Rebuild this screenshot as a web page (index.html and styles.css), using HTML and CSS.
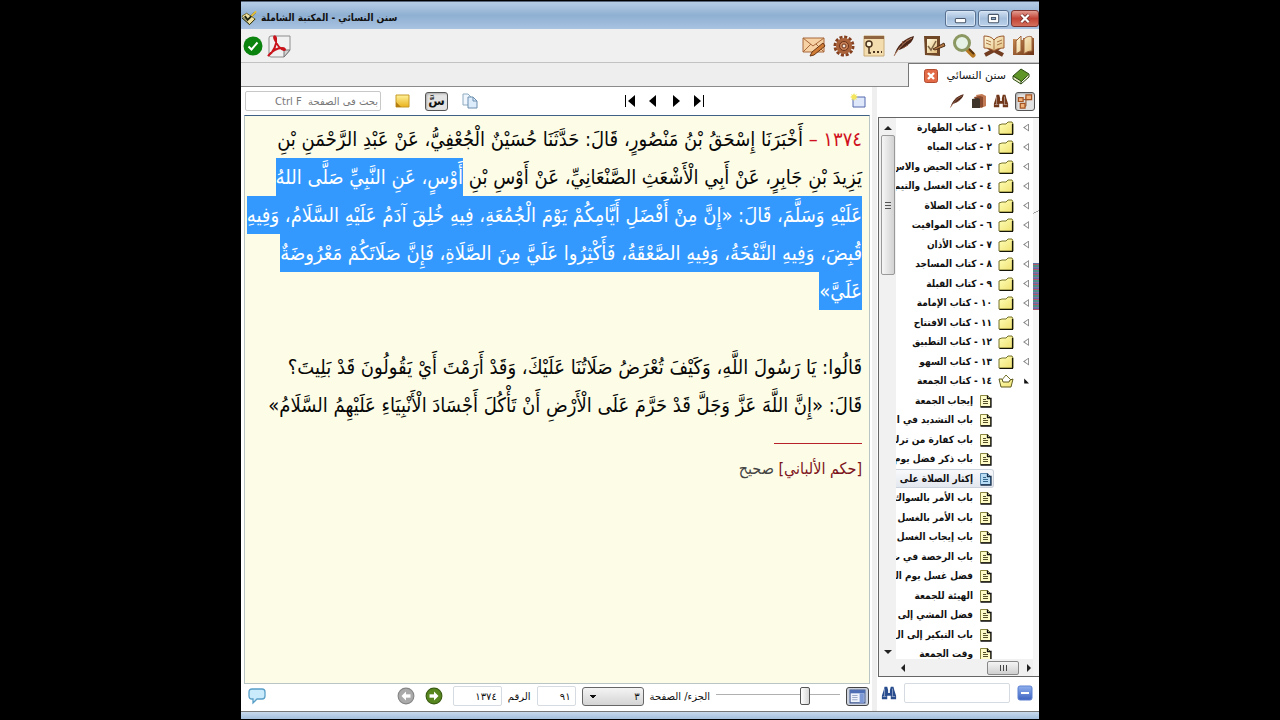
FILE: index.html
```html
<!DOCTYPE html>
<html lang="ar">
<head>
<meta charset="utf-8">
<title>سنن النسائي - المكتبة الشاملة</title>
<link rel="stylesheet" href="styles.css">
</head>
<body>
<svg class="defs" aria-hidden="true">
  <defs>
    <linearGradient id="paper" x1="0" y1="0" x2="1" y2="1"><stop offset="0" stop-color="#fffbe0"/><stop offset="1" stop-color="#e3bd7c"/></linearGradient>
    <linearGradient id="brown" x1="0" y1="0" x2="1" y2="1"><stop offset="0" stop-color="#c88a50"/><stop offset="1" stop-color="#6b3316"/></linearGradient>
    <linearGradient id="yel" x1="0" y1="0" x2="1" y2="1"><stop offset="0" stop-color="#ffffb8"/><stop offset="1" stop-color="#efe070"/></linearGradient>
    <linearGradient id="note" x1="0" y1="0" x2="0" y2="1"><stop offset="0" stop-color="#fff29a"/><stop offset="1" stop-color="#e9b21c"/></linearGradient>
    <linearGradient id="blue" x1="0" y1="0" x2="0" y2="1"><stop offset="0" stop-color="#8fb0ee"/><stop offset="1" stop-color="#3d62c0"/></linearGradient>
    <symbol id="folder" viewBox="0 0 16 14"><path d="M1 13V4l3-1h4l2-2h4l1 2v10z" fill="url(#yel)" stroke="#77722a"/><path d="M1.500 13.500H14.500V3" fill="none" stroke="#15150a" stroke-width="1.200"/></symbol>
    <symbol id="folder-open" viewBox="0 0 16 14"><path d="M3 7l5-6 5 5v3H3z" fill="#fff" stroke="#77722a"/><path d="M1 5l2 8h10l2-8-3 1-1 2H5L4 5z" fill="url(#yel)" stroke="#5f5b1e"/></symbol>
    <symbol id="doc" viewBox="0 0 12 14"><path d="M.5 1.500h7l3 3v8H.5z" fill="#fffcc8" stroke="#8a8640"/><path d="M7.500 1.500v3h3.500v8.500H.5" fill="none" stroke="#111" stroke-width="1.300"/><path d="M3 5.500h3M3 7.500h5M3 9.500h5" stroke="#55502a"/></symbol>
    <symbol id="doc-blue" viewBox="0 0 12 14"><path d="M.5 1.500h7l3 3v8H.5z" fill="#b9dcf5" stroke="#5b8ab0"/><path d="M7.500 1.500v3h3.500v8.500H.5" fill="none" stroke="#17304d" stroke-width="1.300"/><path d="M3 5.500h3M3 7.500h5M3 9.500h5" stroke="#35668c"/></symbol>
    <symbol id="quill" viewBox="0 0 24 24"><path d="M2 22C5 12 11 5 22 2c-1 5-4 8-8 10-2 2-6 4-8 4z" fill="#4a2416"/><path d="M2 22C7 14 12 8 20 4" fill="none" stroke="#b98568"/><path d="M10 10l1-3M14 8l1-3M11 14l5-3" stroke="#8d5136"/></symbol>
    <symbol id="binoc" viewBox="0 0 18 18"><path d="M3 6l1-4h3l1 4v3h2V6l1-4h3l1 4 2 6v4h-6v-4H7v4H1v-4z" fill="currentColor"/><path d="M4 4v9M13 4v9M2 13h4M12 13h4" stroke="#fff" opacity=".5"/></symbol>
  </defs>
</svg>
<main class="window">
  <header class="titlebar">
    <svg class="app-icon" viewBox="0 0 18 16"><path d="M1 6l5-3 9 6-6 6z" fill="#efe0a0" stroke="#6b6223"/><path d="M1 8l8 7 6-6" fill="none" stroke="#33350f"/><path d="M4 6l3 4 8-8" fill="none" stroke="#1d2412" stroke-width="2"/><path d="M11 6l5-5" stroke="#e8bf35" stroke-width="2"/></svg>
    <h1 class="title" dir="rtl">سنن النسائي - المكتبة الشاملة</h1>
    <div class="win-buttons">
      <button class="win-btn" aria-label="تصغير"><svg viewBox="0 0 28 14"><rect x="9" y="7" width="10" height="4" rx="1" fill="#fff" stroke="#49576a"/></svg></button>
      <button class="win-btn" aria-label="تكبير"><svg viewBox="0 0 28 14"><rect x="9" y="3" width="10" height="8" rx="1" fill="#fff" stroke="#49576a"/><rect x="12" y="6" width="4" height="2" fill="#8fabc9" stroke="#49576a"/></svg></button>
      <button class="win-btn close" aria-label="إغلاق"><svg viewBox="0 0 28 14"><path d="M10 3l8 8M18 3l-8 8" stroke="#6b2a25" stroke-width="4"/><path d="M10 3l8 8M18 3l-8 8" stroke="#fff" stroke-width="2.400"/></svg></button>
    </div>
  </header>

  <div class="toolbar">
    <button class="tool small" aria-label="موافق"><svg viewBox="0 0 20 20"><circle cx="10" cy="10" r="9.500" fill="#0b830f"/><path d="M5.500 10.500l3 3 6-7" fill="none" stroke="#fff" stroke-width="2"/></svg></button>
    <button class="tool" aria-label="PDF"><svg viewBox="0 0 24 24"><path d="M4 2h19v14l-6 7H4q-2 0-2-2V4q0-2 2-2z" fill="#f1f1f1" stroke="#8d8d8d"/><path d="M23 16h-6v7z" fill="#d3d3d3" stroke="#777"/><path d="M1 22c6-4 9-12 8-18-1-3-3-2-1 2 2 5 5 9 9 10 2 0 1-2-2-2-5 0-10 3-14 8z" fill="none" stroke="#c9141c" stroke-width="2"/></svg></button>
    <div class="tool-group">
      <button class="tool" aria-label="مراسلة"><svg viewBox="0 0 24 24"><path d="M1 4h21v14H1z" fill="#f7d2a5" stroke="#a7693c"/><path d="M1 4l10 8L22 4M1 18l8-8M22 18l-8-8" fill="none" stroke="#a7693c"/><path d="M8 22l2-4 11-9 2 3-11 9z" fill="#cf7d36" stroke="#6d3715"/></svg></button>
      <button class="tool" aria-label="خيارات"><svg viewBox="0 0 24 24"><circle cx="12" cy="12" r="9" fill="none" stroke="#84401f" stroke-width="3" stroke-dasharray="3 1.700"/><circle cx="12" cy="12" r="6" fill="#b66a3f" stroke="#a9623a" stroke-width="4"/><circle cx="12" cy="12" r="4.500" fill="#c98258" stroke="#6b3218"/><circle cx="12" cy="12" r="2" fill="#f5e6dc" stroke="#6b3218"/></svg></button>
      <button class="tool" aria-label="كلمة المرور"><svg viewBox="0 0 24 24"><path d="M2 2h20v20H2z" fill="#f3dcae" stroke="#c9ae78"/><path d="M2 2h20v3H2z" fill="#8e6540"/><circle cx="7" cy="10" r="3" fill="#fff5d8" stroke="#4b321c" stroke-width="1.500"/><path d="M7 13v6h2" fill="none" stroke="#4b321c" stroke-width="1.500"/><path d="M11 18h2M15 18h2M19 18h1" stroke="#4b321c" stroke-width="2"/></svg></button>
      <button class="tool" aria-label="تحرير"><svg viewBox="0 0 24 24"><use href="#quill"/></svg></button>
      <button class="tool" aria-label="اختيار"><svg viewBox="0 0 24 24"><path d="M2 2h16v20l-15-1z" fill="#704727"/><path d="M5 5h10v14H5z" fill="url(#paper)"/><path d="M6 12l3 4 5-9" fill="none" stroke="#7d6544" stroke-width="1.500"/><path d="M11 15l11-6 1 3-10 4z" fill="#b37845" stroke="#513018"/></svg></button>
      <button class="tool" aria-label="بحث"><svg viewBox="0 0 24 24"><path d="M15 15l6 6" stroke="#b67823" stroke-width="5" stroke-linecap="round"/><path d="M17 15l5 5" stroke="#563312" stroke-width="2"/><circle cx="10" cy="9" r="7.500" fill="#e7f2e6" stroke="#8b9861" stroke-width="3"/></svg></button>
      <button class="tool" aria-label="المصحف"><svg viewBox="0 0 24 24"><path d="M3 21L18 13M21 21L6 13" fill="none" stroke="#713c20" stroke-width="4"/><path d="M2 2c4 0 8 1 10 4 2-3 6-4 10-4v12c-4 0-8 1-10 3-2-2-6-3-10-3z" fill="url(#paper)" stroke="#9b592e"/><path d="M12 6v10M4 6l5 2M4 9l5 2M20 6l-5 2M20 9l-5 2" stroke="#a97646"/></svg></button>
      <button class="tool" aria-label="الكتب"><svg viewBox="0 0 24 24"><path d="M1 5l10 1v15H1zM11 4h11v17H11z" fill="url(#brown)"/><path d="M4 7l5-5v15l-5 3zM12 5c3-3 6-3 8-2v14c-3 0-6 1-8 3z" fill="url(#paper)" stroke="#9b6039"/></svg></button>
    </div>
  </div>

  <nav class="tabs" dir="rtl">
    <div class="tab">
      <svg class="book-icon" viewBox="0 0 18 18"><path d="M1 9l8-7 8 5-8 8z" fill="#5f9427" stroke="#2b4a10"/><path d="M1 9v3l8 5v-3zM9 17l8-7V7" fill="#e6e8c4" stroke="#2b4a10"/></svg>
      <a href="#reader">سنن النسائي</a>
      <button class="tab-close" aria-label="إغلاق"><svg viewBox="0 0 14 14"><rect x=".5" y=".5" width="13" height="13" rx="2" fill="#e36a46" stroke="#b04b30"/><path d="M4 4l6 6M10 4l-6 6" stroke="#fff" stroke-width="2.400"/></svg></button>
    </div>
  </nav>

  <div class="panes">
    <section class="reader-pane">
      <div class="pane-bar">
        <input class="find" type="search" dir="rtl" aria-label="بحث في الصفحة" placeholder="بحث في الصفحة  Ctrl F">
        <button class="icon-btn" aria-label="ملاحظة"><svg viewBox="0 0 16 16"><path d="M1 2h13v12H1z" fill="url(#note)" stroke="#c69a28"/><path d="M1 9l5 5H1z" fill="#b47d12"/></svg></button>
        <button class="toggle" aria-label="التشكيل">سَّ</button>
        <button class="icon-btn" aria-label="نسخ"><svg viewBox="0 0 16 16"><path d="M1 1h5l3 3v8H1z" fill="#eff6fd" stroke="#8fabc0"/><path d="M6 4h5l4 4v7H6z" fill="#dcecfa" stroke="#6c8fb0"/><path d="M11 4v4h4" fill="none" stroke="#6c8fb0"/></svg></button>
        <div class="page-nav">
          <button aria-label="الأول"><svg viewBox="0 0 12 12"><path d="M1 0h1v12H1zM11 0v12L4 6z"/></svg></button>
          <button aria-label="السابق"><svg viewBox="0 0 12 12"><path d="M9 0v12L2 6z"/></svg></button>
          <button aria-label="التالي"><svg viewBox="0 0 12 12"><path d="M3 0v12l7-6z"/></svg></button>
          <button aria-label="الأخير"><svg viewBox="0 0 12 12"><path d="M10 0h1v12h-1zM1 0v12l7-6z"/></svg></button>
        </div>
        <button class="icon-btn" aria-label="نافذة جديدة"><svg viewBox="0 0 16 16"><path d="M3 4h12v10H3z" fill="#dfe7fb" stroke="#5268ae"/><path d="M1 1l2 1 1-2 1 2 2-1-1 2 2 1-2 1 1 2-2-1-1 2-1-2-2 1 1-2-2-1 2-1z" fill="#f3e65e"/></svg></button>
      </div>
      <article class="reader" id="reader" dir="rtl">
        <p><span class="num">١٣٧٤ –</span> أَخْبَرَنَا إِسْحَقُ بْنُ مَنْصُورٍ، قَالَ: حَدَّثَنَا حُسَيْنٌ الْجُعْفِيُّ، عَنْ عَبْدِ الرَّحْمَنِ بْنِ</p>
        <p>يَزِيدَ بْنِ جَابِرٍ، عَنْ أَبِي الْأَشْعَثِ الصَّنْعَانِيِّ، عَنْ أَوْسِ بْنِ <mark>أَوْسٍ، عَنِ النَّبِيِّ صَلَّى اللهُ</mark></p>
        <p><mark>عَلَيْهِ وَسَلَّمَ، قَالَ: «إِنَّ مِنْ أَفْضَلِ أَيَّامِكُمْ يَوْمَ الْجُمُعَةِ، فِيهِ خُلِقَ آدَمُ عَلَيْهِ السَّلَامُ، وَفِيهِ</mark></p>
        <p><mark>قُبِضَ، وَفِيهِ النَّفْخَةُ، وَفِيهِ الصَّعْقَةُ، فَأَكْثِرُوا عَلَيَّ مِنَ الصَّلَاةِ، فَإِنَّ صَلَاتَكُمْ مَعْرُوضَةٌ</mark></p>
        <p class="para-end"><mark>عَلَيَّ»</mark></p>
        <p>قَالُوا: يَا رَسُولَ اللَّهِ، وَكَيْفَ تُعْرَضُ صَلَاتُنَا عَلَيْكَ، وَقَدْ أَرَمْتَ أَيْ يَقُولُونَ قَدْ بَلِيتَ؟</p>
        <p>قَالَ: «إِنَّ اللَّهَ عَزَّ وَجَلَّ قَدْ حَرَّمَ عَلَى الْأَرْضِ أَنْ تَأْكُلَ أَجْسَادَ الْأَنْبِيَاءِ عَلَيْهِمُ السَّلَامُ»</p>
        <hr class="note-rule">
        <p class="footnote"><span>[حكم الألباني]</span> صحيح</p>
      </article>
      <div class="status-controls">
        <button class="icon-btn bubble" aria-label="تعليق"><svg viewBox="0 0 18 18"><path d="M4 2h10q3 0 3 3v4q0 3-3 3H9l-4 4v-4H4q-3 0-3-3V5q0-3 3-3z" fill="#c9ebfb" stroke="#5a9fc7" stroke-width="1.300"/></svg></button>
        <button class="round" aria-label="رجوع"><svg viewBox="0 0 16 16"><circle cx="8" cy="8" r="7" fill="#aaa" stroke="#858585"/><path d="M12 8H6" stroke="#fff" stroke-width="3"/><path d="M8 4L4 8l4 4z" fill="#fff"/></svg></button>
        <button class="round" aria-label="تقدم"><svg viewBox="0 0 16 16"><circle cx="8" cy="8" r="7" fill="#57861f" stroke="#385b10"/><path d="M4 8h6" stroke="#fff" stroke-width="3"/><path d="M8 4l4 4-4 4z" fill="#fff"/></svg></button>
        <input class="field number" id="number" dir="rtl" value="١٣٧٤"><label for="number">الرقم</label>
        <input class="field page" dir="rtl" id="page" aria-label="الصفحة" value="٩١">
        <select class="part" id="part" dir="rtl"><option>٣</option></select><label for="part">الجزء/ الصفحة</label>
        <input class="slider" type="range" min="0" max="100" value="74" aria-label="موضع الصفحة">
        <button class="layout-btn" aria-label="القائمة الجانبية"><svg viewBox="0 0 16 14"><path d="M1 1h14v12H1z" fill="#eef3fc" stroke="#3d558d"/><path d="M1 1h14v3H1z" fill="#4e6fb5"/><path d="M10 4h4v9h-4z" fill="#7d9ad6"/><path d="M3 6h5M3 8h5M3 10h5" stroke="#9babc8"/></svg></button>
      </div>
    </section>

    <aside class="side-pane">
      <div class="side-bar">
        <button class="icon-btn" aria-label="تحرير"><svg viewBox="0 0 24 24"><use href="#quill"/></svg></button>
        <button class="icon-btn" aria-label="كتب"><svg viewBox="0 0 16 16"><path d="M5 2l6-1 4 2v10l-5 2z" fill="#c17a53"/><path d="M3 4l6-1 3 1v10l-4 1z" fill="#8a4a2d"/><path d="M1 6l6-1 2 1v9H1z" fill="#40352b"/></svg></button>
        <button class="icon-btn brown" aria-label="بحث"><svg viewBox="0 0 18 18"><use href="#binoc"/></svg></button>
        <button class="toggle" aria-label="الفهرس"><svg viewBox="0 0 18 18"><path d="M5 7h8M10 4v10H7" fill="none" stroke="#7b4724"/><path d="M10 2h6v5h-6zM2 5h5v4H2zM4 11h5v5H4z" fill="#f0b27c" stroke="#a45322" stroke-width="1.300"/></svg></button>
      </div>
      <div class="tree-box">
        <div class="vscroll" aria-hidden="true"><span class="arrow-up"></span><span class="vthumb"></span><span class="arrow-down"></span></div>
        <ul class="tree" dir="rtl">
          <li><i></i><svg><use href="#folder"/></svg><a href="#reader">١ - كتاب الطهارة</a></li>
          <li><i></i><svg><use href="#folder"/></svg><a href="#reader">٢ - كتاب المياه</a></li>
          <li><i></i><svg><use href="#folder"/></svg><a href="#reader">٣ - كتاب الحيض والاس</a></li>
          <li><i></i><svg><use href="#folder"/></svg><a href="#reader">٤ - كتاب الغسل والتيم</a></li>
          <li><i></i><svg><use href="#folder"/></svg><a href="#reader">٥ - كتاب الصلاة</a></li>
          <li><i></i><svg><use href="#folder"/></svg><a href="#reader">٦ - كتاب المواقيت</a></li>
          <li><i></i><svg><use href="#folder"/></svg><a href="#reader">٧ - كتاب الأذان</a></li>
          <li><i></i><svg><use href="#folder"/></svg><a href="#reader">٨ - كتاب المساجد</a></li>
          <li><i></i><svg><use href="#folder"/></svg><a href="#reader">٩ - كتاب القبلة</a></li>
          <li><i></i><svg><use href="#folder"/></svg><a href="#reader">١٠ - كتاب الإمامة</a></li>
          <li><i></i><svg><use href="#folder"/></svg><a href="#reader">١١ - كتاب الافتتاح</a></li>
          <li><i></i><svg><use href="#folder"/></svg><a href="#reader">١٢ - كتاب التطبيق</a></li>
          <li><i></i><svg><use href="#folder"/></svg><a href="#reader">١٣ - كتاب السهو</a></li>
          <li class="open"><i></i><svg><use href="#folder-open"/></svg><a href="#reader">١٤ - كتاب الجمعة</a></li>
          <li class="leaf"><svg><use href="#doc"/></svg><a href="#reader">إيجاب الجمعة</a></li>
          <li class="leaf"><svg><use href="#doc"/></svg><a href="#reader">باب التشديد في ا</a></li>
          <li class="leaf"><svg><use href="#doc"/></svg><a href="#reader">باب كفارة من ترك</a></li>
          <li class="leaf"><svg><use href="#doc"/></svg><a href="#reader">باب ذكر فضل يوم</a></li>
          <li class="leaf current"><svg><use href="#doc-blue"/></svg><a href="#reader">إكثار الصلاة على</a></li>
          <li class="leaf"><svg><use href="#doc"/></svg><a href="#reader">باب الأمر بالسواك</a></li>
          <li class="leaf"><svg><use href="#doc"/></svg><a href="#reader">باب الأمر بالغسل</a></li>
          <li class="leaf"><svg><use href="#doc"/></svg><a href="#reader">باب إيجاب الغسل</a></li>
          <li class="leaf"><svg><use href="#doc"/></svg><a href="#reader">باب الرخصة في ت</a></li>
          <li class="leaf"><svg><use href="#doc"/></svg><a href="#reader">فضل غسل يوم الج</a></li>
          <li class="leaf"><svg><use href="#doc"/></svg><a href="#reader">الهيئة للجمعة</a></li>
          <li class="leaf"><svg><use href="#doc"/></svg><a href="#reader">فضل المشي إلى ا</a></li>
          <li class="leaf"><svg><use href="#doc"/></svg><a href="#reader">باب التبكير إلى ال</a></li>
          <li class="leaf"><svg><use href="#doc"/></svg><a href="#reader">وقت الجمعة</a></li>
        </ul>
        <div class="hscroll" aria-hidden="true"><span class="arrow-left"></span><span class="hthumb"></span><span class="arrow-right"></span></div>
        <div class="edge" aria-hidden="true"></div>
      </div>
      <div class="side-search">
        <button class="icon-btn blue" aria-label="بحث"><svg viewBox="0 0 18 18"><use href="#binoc"/></svg></button>
        <input class="field" type="text" dir="rtl" aria-label="بحث في الفهرس">
        <button class="icon-btn" aria-label="طي"><svg viewBox="0 0 16 16"><rect x="1" y="1" width="14" height="14" rx="2" fill="url(#blue)" stroke="#5d80d0"/><path d="M4 8h8" stroke="#fff" stroke-width="2"/></svg></button>
      </div>
    </aside>
  </div>
  <div class="frame-bottom"></div>
</main>
</body>
</html>
```
FILE: styles.css
```css
* { box-sizing: border-box; }
body { margin: 0; background: #000; color: #111; font-family: "DejaVu Sans", sans-serif; font-size: 10px; }
button { padding: 0; border: 0; background: none; font: inherit; color: inherit; display: flex; flex: none; }
button svg { width: 100%; height: 100%; display: block; }
a { color: inherit; text-decoration: none; }
input, select { font: inherit; color: inherit; min-width: 0; }
.defs { position: absolute; width: 0; height: 0; }

.window { width: 62.5%; height: 100vh; margin: 0 auto; padding: 1px; display: flex; flex-direction: column; overflow: hidden; }
.titlebar { flex: none; height: 28px; display: flex; align-items: center; gap: 3px; padding-top: 5px; border-top: 1px solid #56657a; background: linear-gradient(#b6cce5, #8fb0d2 50%, #a9c2e2); }
.app-icon { width: 17px; height: 16px; }
.title { margin: 0; font-family: "DejaVu Sans Condensed", "DejaVu Sans", sans-serif; font-size: 10px; line-height: 16px; font-weight: bold; white-space: nowrap; }
.win-buttons { margin-left: auto; display: flex; gap: 2px; }
.win-btn { width: 31px; height: 17px; border: 1px solid #587090; border-radius: 3px; background: linear-gradient(#d2e1f2, #a5bfdc 50%, #bdd3eb); box-shadow: inset 0 0 0 1px #d7e5f4; }
.win-btn.close { width: 28px; border-color: #7c3430; background: linear-gradient(#e39d91, #c34336 50%, #d4705c); box-shadow: none; }

.toolbar { flex: none; height: 34px; display: flex; align-items: center; gap: 4px; padding: 0 3px 0 2px; background: #f0f0f0; border-bottom: 1px solid #c2c2c2; }
.tool { width: 24px; height: 24px; }
.tool.small { width: 20px; height: 20px; }
.tool-group { margin-left: auto; display: flex; gap: 6px; }

.tabs { flex: none; height: 24px; display: flex; background: linear-gradient(to top, #8b8b8b 1px, #eee 1px); }
.tab { width: 131px; display: flex; align-items: center; gap: 6px; padding-right: 9px; background: #fff; border: solid #777; border-width: 1px 0 0 1px; white-space: nowrap; font-size: 11px; }
.book-icon { width: 18px; height: 18px; }
.tab-close { width: 14px; height: 14px; margin-right: 2px; }

.panes { flex: 1; min-height: 0; display: flex; background: #fff; }
.reader-pane { flex: 1; min-width: 0; display: flex; flex-direction: column; padding: 0 2px 0 3px; border-right: 5px solid #efefef; }
.pane-bar { flex: none; height: 28px; display: flex; align-items: center; gap: 14px; padding: 0 4px 0 1px; }
.find { width: 136px; height: 20px; padding: 0 2px; border: 1px solid #c8c8c8; border-radius: 2px; outline: none; font-size: 10px; appearance: none; }
.find::placeholder { color: #777; opacity: 1; }
.icon-btn { width: 16px; height: 16px; }
.toggle { width: 23px; height: 19px; border: 1px solid #555; border-radius: 3px; background: #e3e3e3; align-items: center; justify-content: center; font-size: 12px; line-height: 12px; font-weight: bold; box-shadow: inset 1px 1px 2px #aaa; }
.page-nav { margin: 0 auto; display: flex; gap: 11px; }
.page-nav button { width: 12px; height: 12px; }

.reader { flex: 1; min-height: 0; overflow: hidden; padding: 4px 7px 0; background: #fdfce6; border: 1px solid #b9c4c4; border-top-color: #3f6186; font-family: "DejaVu Sans Condensed", "DejaVu Sans", sans-serif; font-size: 20px; line-height: 38px; color: #080808; }
.reader p { margin: 0; height: 38px; white-space: nowrap; }
.reader .para-end { margin-bottom: 38px; }
.num { color: #d01020; }
mark { display: inline-block; height: 38px; vertical-align: top; background: #3399ff; color: #fff; }
.note-rule { width: 88px; height: 1px; margin-block: 19px 6px; margin-inline: 0 auto; border: 0; background: #b8202a; }
.reader .footnote { font-size: 16px; color: #444; }
.footnote span { color: #7c1420; }

.status-controls { flex: none; height: 27px; display: flex; align-items: center; gap: 6px; padding: 0 1px 3px 4px; font-size: 10px; white-space: nowrap; }
.bubble { width: 18px; height: 18px; margin-right: auto; }
.round { width: 18px; height: 18px; margin-right: 4px; }
.field { height: 20px; padding: 0 4px; border: 1px solid #d5dbe0; border-radius: 2px; background: #fff; }
.number { width: 49px; }
.page { width: 39px; }
.part { width: 62px; height: 19px; padding: 0 3px; border: 1px solid #666; border-radius: 3px; appearance: none; background: linear-gradient(45deg, transparent 50%, #111 50%) 6px 7px / 4px 4px no-repeat, linear-gradient(-45deg, transparent 50%, #111 50%) 10px 7px / 4px 4px no-repeat, linear-gradient(#f4f4f4, #d4d4d4); }
.slider { width: 124px; height: 20px; margin: 0; appearance: none; background: linear-gradient(#b0b0b0, #b0b0b0) 0 8px / 100% 1px no-repeat; }
.slider::-webkit-slider-thumb { appearance: none; width: 10px; height: 18px; border: 1px solid #555; border-radius: 2px; background: linear-gradient(90deg, #fff, #d7d7d7); }
.layout-btn { width: 23px; height: 19px; padding: 1px 2px; border: 1px solid #444; border-radius: 3px; background: #cdd3de; }

.side-pane { flex: none; width: 20.3%; display: flex; flex-direction: column; }
.side-bar { flex: none; height: 30px; display: flex; align-items: center; justify-content: flex-end; gap: 6px; padding: 0 4px 2px 0; }
.side-bar .toggle { width: 20px; }
.brown { color: #70371b; }
.blue { color: #274b8d; }
.tree-box { flex: 1; min-height: 0; display: grid; grid-template: minmax(0, 1fr) 17px / 17px minmax(0, 1fr) 6px; border: solid #666; border-width: 1px 0 1px 1px; margin-left: 1px; }
.vscroll { grid-row: 1 / 3; display: flex; flex-direction: column; align-items: center; background: #f1f1f1; padding: 8px 1px 22px; }
.arrow-up, .arrow-down { border: 4px solid transparent; height: 0; }
.arrow-up { border-bottom-color: #222; border-top: 0; }
.arrow-down { border-top-color: #222; border-bottom: 0; margin-top: auto; }
.vthumb { width: 14px; height: 140px; margin-top: 5px; border: 1px solid #999; border-radius: 2px; background: linear-gradient(#555, #555) center 66px / 6px 1px no-repeat, linear-gradient(#555, #555) center 69px / 6px 1px no-repeat, linear-gradient(#555, #555) center 72px / 6px 1px no-repeat, linear-gradient(90deg, #f6f6f6, #d2d2d2); }
.tree { margin: 0; padding: 0; list-style: none; overflow: hidden; font-family: "DejaVu Sans Condensed", "DejaVu Sans", sans-serif; font-size: 10px; line-height: 14px; font-weight: bold; }
.tree li { height: 19px; display: flex; align-items: center; gap: 6px; padding-right: 4px; white-space: nowrap; }
.tree li:nth-child(even) { height: 20px; }
.tree svg { flex: none; width: 16px; height: 14px; }
.tree i { flex: none; width: 6px; height: 8px; margin-left: 3px; background: #888; clip-path: polygon(100% 0, 100% 100%, 0 50%, 100% 0, 85% 20%, 30% 50%, 85% 80%, 85% 20%); }
.tree .open i { background: #111; clip-path: polygon(20% 20%, 20% 80%, 100% 80%); }
.tree .leaf { gap: 7px; margin-right: 39px; padding-right: 2px; }
.tree .leaf svg { width: 12px; }
.tree .current { background: linear-gradient(#f8f9fb, #e3e8ef); border: 1px solid #cdd3dc; border-left: 0; border-radius: 0 3px 3px 0; padding-right: 1px; }
.hscroll { grid-column: 2; grid-row: 2; display: flex; align-items: center; gap: 8px; padding: 0 2px 0 5px; background: #f1f1f1; }
.arrow-left, .arrow-right { border: 4px solid transparent; width: 0; }
.arrow-left { border-right-color: #222; border-left: 0; margin-right: auto; }
.arrow-right { border-left-color: #222; border-right: 0; }
.hthumb { width: 32px; height: 14px; border: 1px solid #888; border-radius: 2px; background: repeating-linear-gradient(90deg, #444 0 1px, transparent 1px 3px) center / 7px 6px no-repeat, linear-gradient(#f4f4f4, #d0d0d0); }
.edge { grid-column: 3; grid-row: 1 / 3; background: repeating-linear-gradient(#5c6fa8 0 1px, #b05a6a 1px 2px, #4f9086 2px 4px, #8c6aa5 4px 5px) 0 145px / 6px 47px no-repeat, linear-gradient(155deg, transparent 48%, #666 50%, transparent 52%) 0 80px / 6px 28px no-repeat, #f5f5f5; }
.side-search { flex: none; height: 34px; display: flex; align-items: center; gap: 7px; padding: 0 6px 2px 4px; }
.side-search .field { flex: 1; }
.frame-bottom { flex: none; height: 8px; border-top: 1px solid #777; background: linear-gradient(#c8d9ec, #a4bfdc); }
```
